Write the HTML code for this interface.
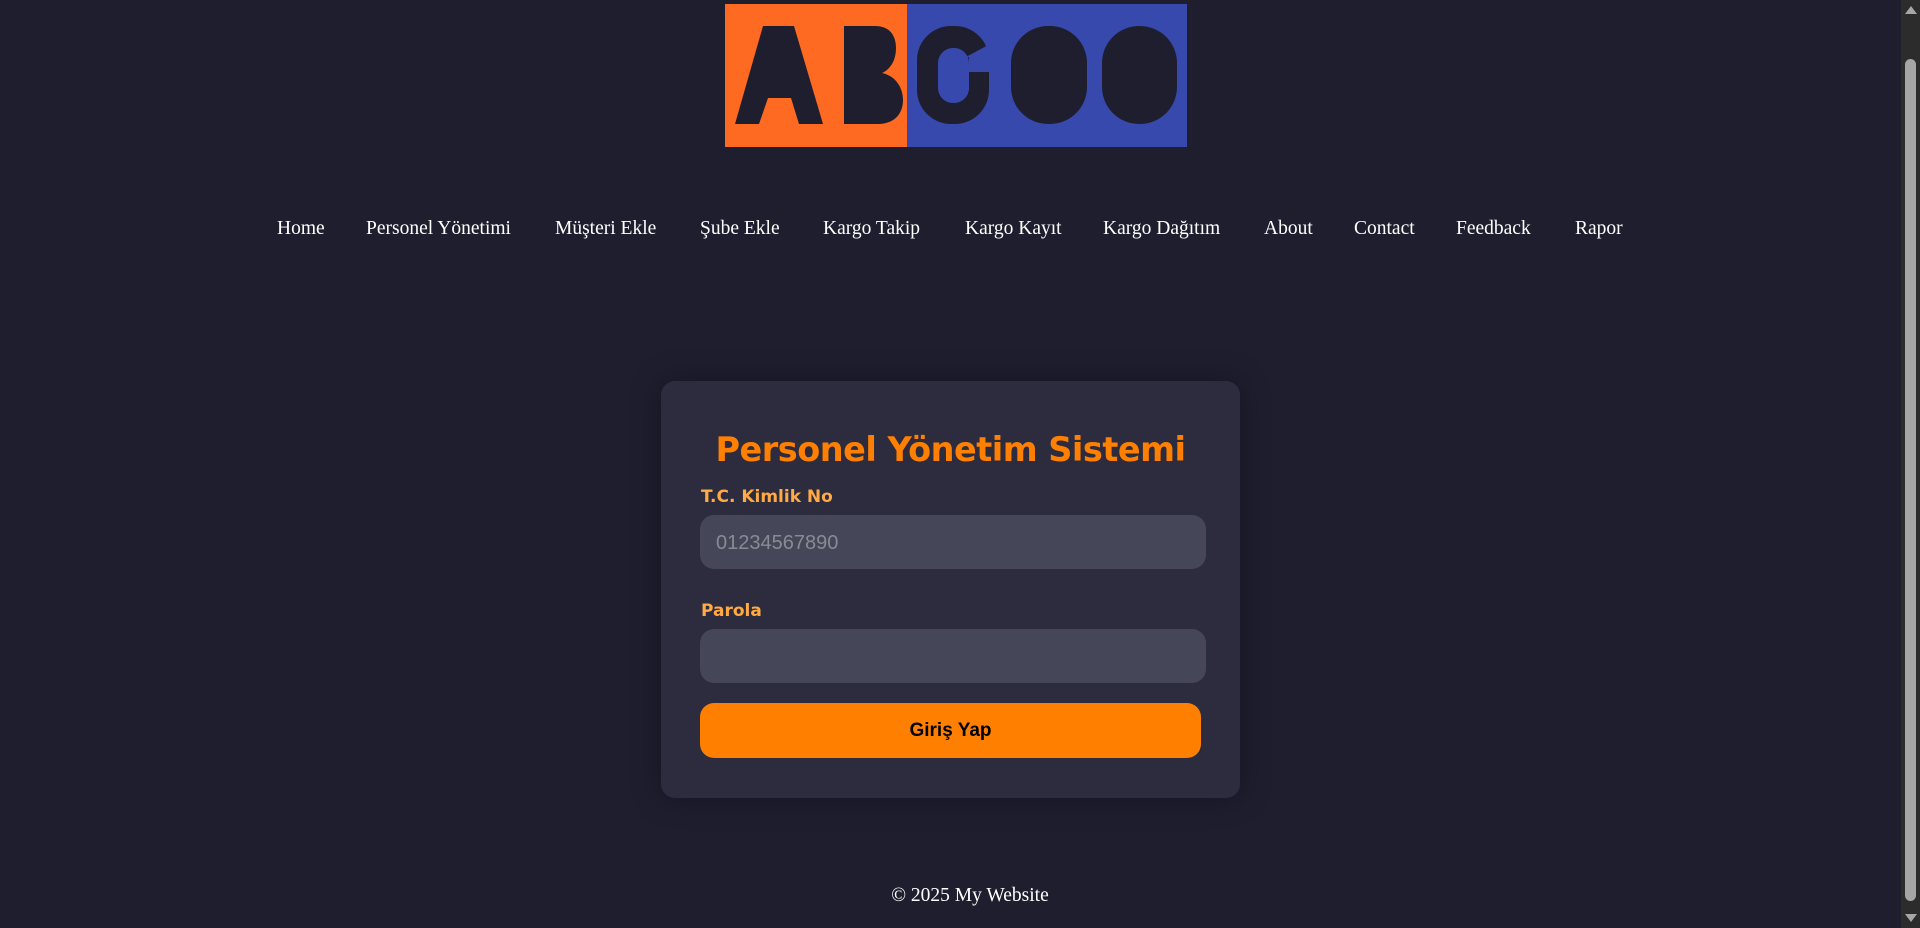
<!DOCTYPE html>
<html><head><meta charset="utf-8"><style>
html,body{margin:0;padding:0;width:1920px;height:928px;overflow:hidden;background:#1f1e2f;}
.nav a{position:absolute;top:218px;font:19.5px "Liberation Serif",serif;color:#fff;text-decoration:none;white-space:nowrap;}
.card{position:absolute;left:661px;top:381px;width:579px;height:417px;background:#2d2b3e;border-radius:14px;box-shadow:0 0 30px rgba(0,0,0,.35);}
h1{position:absolute;top:430px;margin:0;text-align:center;font:bold 33.5px "DejaVu Sans","Liberation Sans",sans-serif;color:#ff8000;letter-spacing:-0.5px;}
.lbl{position:absolute;left:701px;font:bold 17px "DejaVu Sans","Liberation Sans",sans-serif;color:#ffaa44;}
.inp{position:absolute;left:700px;width:506px;height:54px;background:#454657;border-radius:14px;}
.ph{position:absolute;left:716px;top:532px;font:20px "Liberation Sans",sans-serif;color:#8a8a95;}
.btn{position:absolute;left:700px;top:703px;width:501px;height:55px;background:#ff8000;border-radius:14px;text-align:center;font:bold 19px "Liberation Sans",sans-serif;line-height:55px;color:#000;}
.foot{position:absolute;left:0;width:1940px;top:885px;text-align:center;font:19.5px "Liberation Serif",serif;color:#fff;}
</style></head><body>
<svg width="1920" height="160" style="position:absolute;left:0;top:0">
<rect x="725" y="4" width="183" height="143" fill="#ff6a22"/>
<rect x="907" y="4" width="280" height="143" fill="#3849ad"/>
<g fill="#1f1e2e">
<polygon points="735,124 763,26 794,26 823,124 799,124 791,98 768,98 759,124"/>
<path d="M844,26 H875 C893,26 896,40 896,48 C896,62 889,70 882,73 C896,76 903,88 903,100 C903,115 893,124 878,124 H844 Z"/>
<rect x="917" y="26" width="72" height="98" rx="34"/>
<rect x="1011" y="26" width="76" height="98" rx="37"/>
<rect x="1102" y="26" width="75" height="98" rx="37"/>
</g>
<g fill="#3849ad">
<rect x="938" y="48" width="31" height="55" rx="15"/>
<polygon points="966,57 990,44 993,44 993,72 958,72 958,90 969,90 969,57"/>
</g>
</svg>
<div class="nav">
<a style="left:277px">Home</a>
<a style="left:366px">Personel Yönetimi</a>
<a style="left:555px">Müşteri Ekle</a>
<a style="left:700px">Şube Ekle</a>
<a style="left:823px">Kargo Takip</a>
<a style="left:965px">Kargo Kayıt</a>
<a style="left:1103px">Kargo Dağıtım</a>
<a style="left:1264px">About</a>
<a style="left:1354px">Contact</a>
<a style="left:1456px">Feedback</a>
<a style="left:1575px">Rapor</a>
</div>
<div class="card"></div>
<h1 style="left:661px;width:579px">Personel Yönetim Sistemi</h1>
<div class="lbl" style="top:487px">T.C. Kimlik No</div>
<div class="inp" style="top:515px"></div>
<div class="ph">01234567890</div>
<div class="lbl" style="top:601px">Parola</div>
<div class="inp" style="top:629px"></div>
<div class="btn">Giriş Yap</div>
<div class="foot">© 2025 My Website</div>
<div style="position:absolute;left:1901px;top:0;width:19px;height:928px;background:#2c2c2c"></div>
<div style="position:absolute;left:1905px;top:59px;width:11px;height:842px;background:#a6a6a6;border-radius:6px"></div>
<div style="position:absolute;left:1905px;top:6px;width:0;height:0;border-left:6px solid transparent;border-right:6px solid transparent;border-bottom:8px solid #a6a6a6"></div>
<div style="position:absolute;left:1905px;top:914px;width:0;height:0;border-left:6px solid transparent;border-right:6px solid transparent;border-top:8px solid #a6a6a6"></div>
</body></html>
